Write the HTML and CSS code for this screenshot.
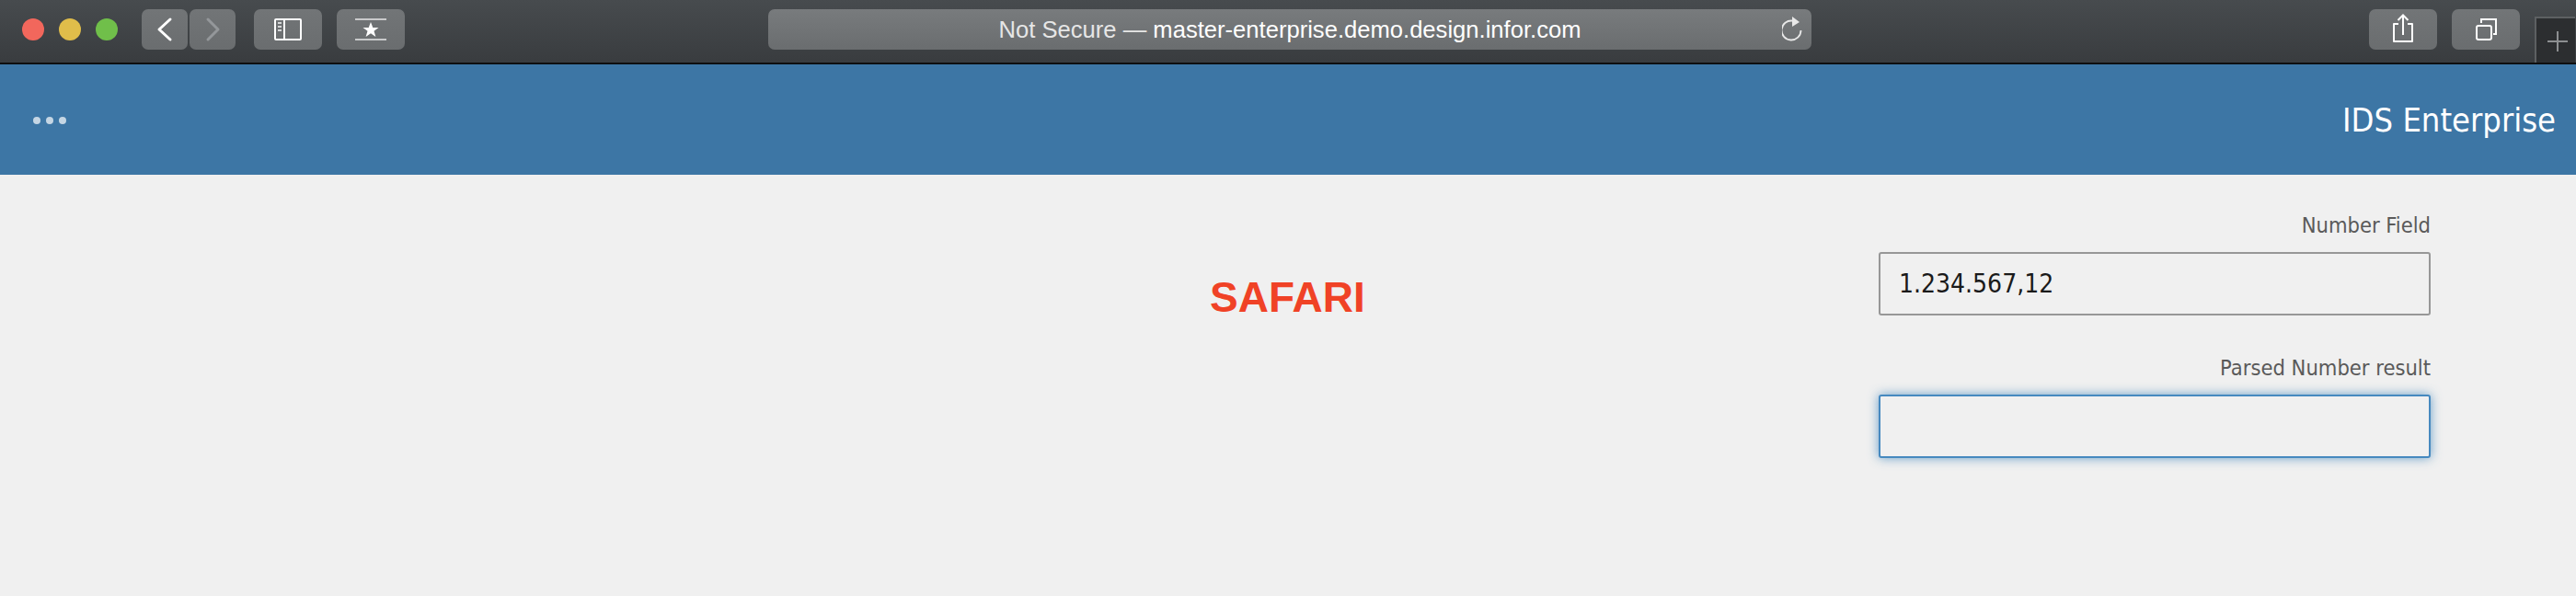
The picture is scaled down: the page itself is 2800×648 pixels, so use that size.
FILE: index.html
```html
<!DOCTYPE html>
<html lang="en">

<head>
    <meta charset="UTF-8" />
    <title>Not Secure — master-enterprise.demo.design.infor.com</title>
    <link rel="stylesheet" href="styles.css">
</head>

<body>
    <div class="toolbar">
        <div class="lights">
            <span class="light red"></span>
            <span class="light yellow"></span>
            <span class="light green"></span>
        </div>

        <div class="nav-group">
            <div class="btn btn-nav">
                <svg width="50" height="44" viewBox="0 0 50 44"><path d="M31 11 19 22 31 33" fill="none" stroke="#fff" stroke-width="3" stroke-linecap="round" stroke-linejoin="round"/></svg>
            </div>
            <div class="btn btn-nav">
                <svg width="50" height="44" viewBox="0 0 50 44"><path d="M20 11 31 22 20 33" fill="none" stroke="#94979a" stroke-width="3" stroke-linecap="round" stroke-linejoin="round"/></svg>
            </div>
        </div>

        <div class="btn btn-wide btn-sidebar">
            <svg width="74" height="44" viewBox="0 0 74 44">
                <rect x="23" y="11" width="28" height="22" rx="1" fill="none" stroke="#fff" stroke-width="2"/>
                <path d="M33 11V33" stroke="#fff" stroke-width="2"/>
                <path d="M26 15H30M26 19H30M26 23H30" stroke="#d5d6d7" stroke-width="2"/>
            </svg>
        </div>

        <div class="btn btn-wide">
            <svg width="74" height="44" viewBox="0 0 74 44">
                <path d="M20 11H54M20 33H54" stroke="#c9cacb" stroke-width="2"/>
                <path d="M37 14 39.300 20H45.500L40.500 23.800 42.400 30 37 26.200 31.600 30 33.500 23.800 28.500 20H34.700Z" fill="#fff"/>
            </svg>
        </div>

        <div class="address">
            <div class="address-text">Not Secure — <span class="host">master-enterprise.demo.design.infor.com</span></div>
            <svg class="reload" width="26" height="28" viewBox="0 0 26 28">
                <path d="M11.500 4.600A10.500 10.500 0 1 0 20.500 15" fill="none" stroke="#e8e8e8" stroke-width="1.800"/>
                <path d="M11 0 19 6 11 11Z" fill="#e8e8e8"/>
            </svg>
        </div>

        <div class="btn btn-wide">
            <svg width="74" height="44" viewBox="0 0 74 44">
                <path d="M32 16H27V35H47V16H42" fill="none" stroke="#fff" stroke-width="2" stroke-linejoin="round"/>
                <path d="M37 7V28M31.500 12 37 6.500 42.500 12" fill="none" stroke="#fff" stroke-width="2"/>
            </svg>
        </div>

        <div class="btn btn-wide">
            <svg width="74" height="44" viewBox="0 0 74 44">
                <rect x="27" y="18" width="16" height="15" rx="2" fill="none" stroke="#fff" stroke-width="2"/>
                <path d="M32 15V11H48V27H45" fill="none" stroke="#fff" stroke-width="2"/>
            </svg>
        </div>

        <div class="new-tab">
            <svg width="44" height="50" viewBox="0 0 44 50"><path d="M25 16V38M14 27H36" stroke="#8d8f91" stroke-width="2"/></svg>
        </div>
    </div>

    <header class="app-header">
        <div class="dots">
            <span></span>
            <span></span>
            <span></span>
        </div>
        <div class="app-title">IDS Enterprise</div>
    </header>

    <main class="content">
        <div class="browser-name">SAFARI</div>

        <form class="fields">
            <div class="field">
                <label for="numberField">Number Field</label>
                <input type="text" id="numberField" value="1.234.567,12">
            </div>
            <div class="field">
                <label for="parsedResult">Parsed Number result</label>
                <input type="text" id="parsedResult" class="focused">
            </div>
        </form>
    </main>
</body>

</html>
```

FILE: styles.css
```css
* {
    box-sizing: border-box;
}

html,
body {
    height: 100%;
}

body {
    margin: 0;
    display: flex;
    flex-direction: column;
    overflow: hidden;
    background: #f0f0f0;
    font-family: 'DejaVu Sans Condensed', 'DejaVu Sans', sans-serif;
}

/* browser chrome */
.toolbar {
    height: 70px;
    flex-shrink: 0;
    display: flex;
    align-items: flex-start;
    padding: 10px 0 0 24px;
    background: linear-gradient(#474b4e, #393c3f);
    border-bottom: 2px solid #0e0f10;
}

.lights {
    display: flex;
    gap: 16px;
    margin: 10px 26px 0 0;
}

.light {
    width: 24px;
    height: 24px;
    border-radius: 50%;
}

.red {
    background: #f2675c;
}

.yellow {
    background: #e0bd4a;
}

.green {
    background: #70bf4a;
}

.nav-group {
    display: flex;
    gap: 2px;
    margin-right: 20px;
}

.btn {
    height: 44px;
    flex-shrink: 0;
    border-radius: 7px;
    background: linear-gradient(#727577, #6a6d6f);
}

.btn svg {
    display: block;
}

.btn-nav {
    width: 50px;
}

.btn-wide {
    width: 74px;
}

.btn-sidebar {
    margin-right: 16px;
}

.address {
    width: 1134px;
    height: 44px;
    flex-shrink: 0;
    margin: 0 606px 0 395px;
    display: flex;
    align-items: center;
    justify-content: center;
    position: relative;
    border-radius: 7px;
    background: linear-gradient(#787b7d, #6a6d6f);
    color: #e6e6e6;
    font-family: 'Liberation Sans', sans-serif;
    font-size: 25.600px;
}

.host {
    color: #fff;
}

.reload {
    position: absolute;
    right: 6px;
    top: 8px;
}

.toolbar > .btn-wide:nth-last-child(3) {
    margin-right: 16px;
}

.new-tab {
    width: 44px;
    height: 50px;
    flex-shrink: 0;
    margin: 8px 0 0 16px;
    background: #2c2e30;
    border-top: 2px solid #5d6062;
    border-left: 2px solid #5d6062;
}

.new-tab svg {
    display: block;
    margin: -2px 0 0 -2px;
}

/* app header */
.app-header {
    height: 120px;
    flex-shrink: 0;
    display: flex;
    align-items: center;
    justify-content: space-between;
    padding: 0 22px 0 36px;
    background: #3d76a5;
}

.dots {
    display: flex;
    gap: 6px;
    margin-top: 2px;
}

.dots span {
    width: 8px;
    height: 8px;
    border-radius: 50%;
    background: #c5d6e4;
}

.app-title {
    color: #fff;
    font-size: 36px;
}

/* page content */
.content {
    flex: 1;
    display: flex;
    justify-content: space-between;
    align-items: flex-start;
    padding: 0 158px 0 1315px;
}

.browser-name {
    margin-top: 103px;
    color: #f04226;
    font-family: 'Liberation Sans', sans-serif;
    font-size: 46px;
    font-weight: bold;
    line-height: 60px;
}

.fields {
    width: 600px;
    padding-top: 38px;
}

.field {
    display: flex;
    flex-direction: column;
    margin-bottom: 40px;
}

.field label {
    text-align: right;
    color: #5a5a5a;
    font-size: 23.500px;
    line-height: 34px;
    margin-bottom: 12px;
}

.field input {
    height: 69px;
    padding: 0 20px;
    border: 2px solid #979797;
    border-radius: 3px;
    outline: none;
    background: #f0f0f0;
    color: #1a1a1a;
    font-family: 'DejaVu Sans Condensed', 'DejaVu Sans', sans-serif;
    font-size: 28px;
}

.field input.focused {
    border-color: #4689bf;
    box-shadow: 0 0 12px rgba(70, 137, 191, 0.8);
}
```
